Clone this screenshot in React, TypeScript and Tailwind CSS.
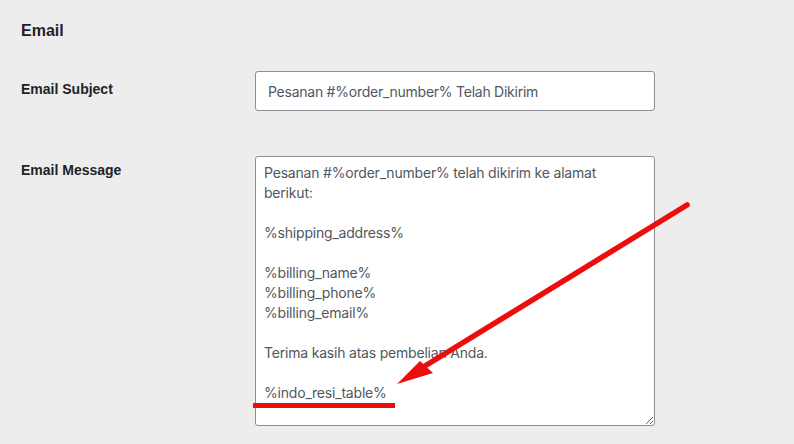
import { useState } from "react";

const message = `Pesanan #%order_number% telah dikirim ke alamat berikut:

%shipping_address%

%billing_name%
%billing_phone%
%billing_email%

Terima kasih atas pembelian Anda.

%indo_resi_table%`;

function Annotation() {
  // red marker arrow + underline drawn over the textarea
  return (
    <svg
      className="pointer-events-none absolute left-0 top-0"
      width={794}
      height={444}
      aria-hidden
    >
      <line x1={687} y1={205} x2={420} y2={369} stroke="#ee0d0d" strokeWidth={5.5} strokeLinecap="round" />
      <polygon points="397,384 420,361 433,373" fill="#ee0d0d" />
      <rect x={253} y={403} width={142} height={5} fill="#ee0d0d" />
    </svg>
  );
}

export default function App() {
  const [subject, setSubject] = useState("Pesanan #%order_number% Telah Dikirim");
  const [body, setBody] = useState(message);

  return (
    <div
      className="relative h-[444px] w-[794px] overflow-hidden bg-[#ededed] text-[#1d2327]"
      style={{ fontFamily: '"Liberation Sans", Arial, sans-serif' }}
    >
      <div className="px-[21px] pt-[21px]">
        <h2 className="text-[16px] font-bold leading-5">Email</h2>

        <div className="mt-[30px] grid grid-cols-[234px_400px] gap-y-[45px]">
          <label className="pt-[10px] text-[14px] font-bold leading-4">Email Subject</label>
          <input
            value={subject}
            onChange={(e) => setSubject(e.target.value)}
            className="h-[40px] rounded-[3px] border border-[#8c8f94] bg-white px-[12px] font-['Inter',sans-serif] text-[14px] tracking-[-0.25px] text-[#50575e] outline-none"
          />

          <label className="pt-[6px] text-[14px] font-bold leading-4">Email Message</label>
          <textarea
            value={body}
            onChange={(e) => setBody(e.target.value)}
            className="h-[270px] resize-y rounded-[3px] border border-[#8c8f94] bg-white px-[8px] pt-[6px] font-['Inter',sans-serif] text-[14px] leading-5 tracking-[-0.2px] text-[#50575e] outline-none"
          />
        </div>
      </div>
      <Annotation />
    </div>
  );
}
